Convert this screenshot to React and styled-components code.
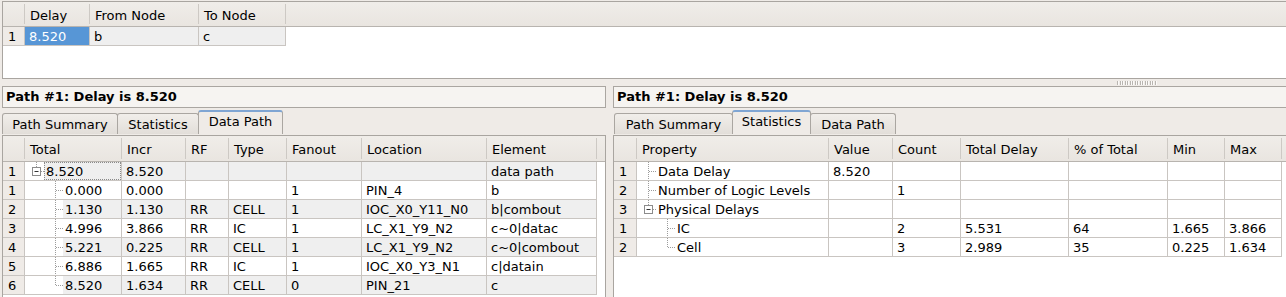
import React from "react";
import styled, { createGlobalStyle } from "styled-components";

const GlobalStyle = createGlobalStyle`
  html, body {
    margin: 0;
    padding: 0;
    background: #efebe7;
    overflow: hidden;
  }
  body {
    font-family: "DejaVu Sans", "Liberation Sans", sans-serif;
    font-size: 13px;
    color: #000;
  }
`;

const GRID = "#c9c5c1";

const Window = styled.div`
  width: 1286px;
  height: 297px;
  overflow: hidden;
  padding-top: 1px;
  box-sizing: border-box;
  display: flex;
  flex-direction: column;
`;

const TopPane = styled.div`
  flex: none;
  height: 78px;
  margin-left: 2px;
  box-sizing: border-box;
  border: 1px solid #a9a5a0;
  border-right: none;
  background: #fff;
  overflow: hidden;
`;

const HSplitter = styled.div`
  flex: none;
  height: 7px;
  display: flex;
  align-items: center;
  justify-content: flex-end;
  padding-right: 129px;
`;

const Grip = styled.div`
  width: 40px;
  height: 4px;
  background: repeating-linear-gradient(
    90deg,
    #b9b5b0 0 1px,
    #fbfaf9 1px 2px,
    #efebe7 2px 2.5px
  );
`;

const BottomPane = styled.div`
  flex: 1;
  display: flex;
  gap: 7px;
  min-height: 0;
`;

const Panel = styled.div`
  flex: none;
  width: ${(p) => p.$w}px;
  margin-left: ${(p) => p.$ml || 0}px;
  display: flex;
  flex-direction: column;
`;

const TitleBox = styled.div`
  flex: none;
  height: 22px;
  box-sizing: border-box;
  border: 1px solid #aaa6a1;
  background: #f6f4f1;
  font-weight: bold;
  line-height: 20px;
  padding-left: 3px;
  white-space: nowrap;
`;

const TabBar = styled.div`
  flex: none;
  display: flex;
  align-items: flex-end;
  height: 24px;
  margin-top: 2px;
  padding-left: ${(p) => p.$pl || 0}px;
`;

const Tab = styled.div`
  box-sizing: border-box;
  width: ${(p) => p.$w}px;
  height: ${(p) => (p.$active ? 24 : 21)}px;
  border: 1px solid #aaa6a1;
  border-bottom: none;
  border-top: ${(p) => (p.$active ? "2px solid #7fa5d3" : "1px solid #aaa6a1")};
  border-radius: 3px 3px 0 0;
  background: ${(p) =>
    p.$active ? "#efebe7" : "linear-gradient(#f1eeea, #e2ded9)"};
  display: flex;
  align-items: center;
  justify-content: center;
  padding-bottom: ${(p) => (p.$active ? 3 : 0)}px;
  white-space: nowrap;
  & + & {
    margin-left: -1px;
  }
`;

const Frame = styled.div`
  flex: 1;
  margin-top: 1px;
  box-sizing: border-box;
  border: 1px solid #a9a5a0;
  border-bottom: none;
  background: #fff;
  overflow: hidden;
`;

const HeaderRow = styled.div`
  display: grid;
  grid-template-columns: ${(p) => p.$cols};
  height: ${(p) => p.$h}px;
  box-sizing: border-box;
  background: linear-gradient(#f0ede9, #e9e5e0);
  border-bottom: 1px solid #b8b4af;
`;

const HeadCell = styled.div`
  box-sizing: border-box;
  border-right: 1px solid #cdc9c4;
  padding: 2px 0 0 5px;
  display: flex;
  align-items: center;
  white-space: nowrap;
  overflow: hidden;
  margin: 2px 0;
`;

const BodyRow = styled.div`
  display: grid;
  grid-template-columns: ${(p) => p.$cols};
  height: 19px;
`;

const Cell = styled.div`
  box-sizing: border-box;
  height: 19px;
  line-height: 20px;
  padding-left: 4px;
  border-right: 1px solid ${GRID};
  border-bottom: 1px solid ${GRID};
  background: ${(p) => (p.$sel ? "#5796d6" : p.$alt ? "#efefef" : "#fff")};
  color: ${(p) => (p.$sel ? "#fff" : "#000")};
  white-space: nowrap;
  overflow: hidden;
`;

const RowHead = styled(Cell)`
  background: #efebe7;
  padding-left: 5px;
`;

const TreeCell = styled.div`
  box-sizing: border-box;
  height: 19px;
  display: flex;
  border-right: 1px solid ${GRID};
  border-bottom: 1px solid ${GRID};
  background: #fff;
  overflow: hidden;
`;

const TreeLabel = styled.div`
  flex: 1;
  box-sizing: border-box;
  line-height: 20px;
  padding-left: 2px;
  white-space: nowrap;
  background: ${(p) => (p.$alt ? "#efefef" : "#fff")};
  outline: ${(p) => (p.$focus ? "1px dotted #8a8a8a" : "none")};
  outline-offset: -1px;
`;

const BranchSvg = styled.svg`
  flex: none;
  display: block;
`;

const DOT = { stroke: "#9c9c9c", strokeWidth: 1, strokeDasharray: "1 1" };

const Branch = ({ kind }) => (
  <BranchSvg width="19" height="18" viewBox="0 0 19 18">
    {kind === "mid" && (
      <>
        <line x1="11.5" y1="0" x2="11.5" y2="18" {...DOT} />
        <line x1="12" y1="9.5" x2="19" y2="9.5" {...DOT} />
      </>
    )}
    {kind === "last" && (
      <>
        <line x1="11.5" y1="0" x2="11.5" y2="10" {...DOT} />
        <line x1="12" y1="9.5" x2="19" y2="9.5" {...DOT} />
      </>
    )}
    {kind === "box" && (
      <>
        <line x1="11.5" y1="0" x2="11.5" y2="5" {...DOT} />
        <rect x="7.5" y="5.5" width="8" height="8" fill="#fff" stroke="#8c8c8c" />
        <line x1="9.5" y1="9.5" x2="13.5" y2="9.5" stroke="#333" />
        <line x1="16" y1="9.5" x2="19" y2="9.5" {...DOT} />
      </>
    )}
  </BranchSvg>
);

const Tree = ({ branches, alt, focus, children }) => (
  <TreeCell>
    {branches.map((b, i) => (
      <Branch key={i} kind={b} />
    ))}
    <TreeLabel $alt={alt} $focus={focus}>
      {children}
    </TreeLabel>
  </TreeCell>
);

const topCols = "22px 65px 109px 87px";
const leftCols = "22px 97px 64px 43px 58px 75px 125px 110px";
const rightCols = "23px 192px 64px 68px 108px 99px 57px 57px";

const leftRows = [
  { n: "1", br: ["box"], c: ["8.520", "8.520", "", "", "", "", "data path"], focus: true },
  { n: "1", br: ["none", "mid"], c: ["0.000", "0.000", "", "", "1", "PIN_4", "b"] },
  { n: "2", br: ["none", "mid"], c: ["1.130", "1.130", "RR", "CELL", "1", "IOC_X0_Y11_N0", "b|combout"] },
  { n: "3", br: ["none", "mid"], c: ["4.996", "3.866", "RR", "IC", "1", "LC_X1_Y9_N2", "c~0|datac"] },
  { n: "4", br: ["none", "mid"], c: ["5.221", "0.225", "RR", "CELL", "1", "LC_X1_Y9_N2", "c~0|combout"] },
  { n: "5", br: ["none", "mid"], c: ["6.886", "1.665", "RR", "IC", "1", "IOC_X0_Y3_N1", "c|datain"] },
  { n: "6", br: ["none", "last"], c: ["8.520", "1.634", "RR", "CELL", "0", "PIN_21", "c"] },
];

const rightRows = [
  { n: "1", br: ["mid"], c: ["Data Delay", "8.520", "", "", "", "", ""] },
  { n: "2", br: ["mid"], c: ["Number of Logic Levels", "", "1", "", "", "", ""] },
  { n: "3", br: ["box"], c: ["Physical Delays", "", "", "", "", "", ""] },
  { n: "1", br: ["none", "mid"], c: ["IC", "", "2", "5.531", "64", "1.665", "3.866"] },
  { n: "2", br: ["none", "last"], c: ["Cell", "", "3", "2.989", "35", "0.225", "1.634"] },
];

const Header = ({ cols, h, labels }) => (
  <HeaderRow $cols={cols} $h={h}>
    <HeadCell />
    {labels.map((l) => (
      <HeadCell key={l}>{l}</HeadCell>
    ))}
  </HeaderRow>
);

const PathPanel = ({ width, ml, tabs, active, tabPad, cols, labels, rows, striped }) => (
  <Panel $w={width} $ml={ml}>
    <TitleBox>Path #1: Delay is 8.520</TitleBox>
    <TabBar $pl={tabPad}>
      {tabs.map(([name, w]) => (
        <Tab key={name} $w={w} $active={name === active}>
          {name}
        </Tab>
      ))}
    </TabBar>
    <Frame>
      <Header cols={cols} h={26} labels={labels} />
      {rows.map((r, i) => {
        const alt = striped && i % 2 === 0;
        const [first, ...rest] = r.c;
        return (
          <BodyRow key={i} $cols={cols}>
            <RowHead>{r.n}</RowHead>
            <Tree branches={r.br} alt={alt} focus={r.focus}>
              {first}
            </Tree>
            {rest.map((v, j) => (
              <Cell key={j} $alt={alt}>
                {v}
              </Cell>
            ))}
          </BodyRow>
        );
      })}
    </Frame>
  </Panel>
);

export default function App() {
  return (
    <>
      <GlobalStyle />
      <Window>
        <TopPane>
          <Header cols={topCols} h={25} labels={["Delay", "From Node", "To Node"]} />
          <BodyRow $cols={topCols}>
            <RowHead>1</RowHead>
            <Cell $sel>8.520</Cell>
            <Cell $alt>b</Cell>
            <Cell $alt>c</Cell>
          </BodyRow>
        </TopPane>
        <HSplitter>
          <Grip />
        </HSplitter>
        <BottomPane>
          <PathPanel
            width={604}
            ml={2}
            tabs={[
              ["Path Summary", 116],
              ["Statistics", 82],
              ["Data Path", 85],
            ]}
            active="Data Path"
            cols={leftCols}
            labels={["Total", "Incr", "RF", "Type", "Fanout", "Location", "Element"]}
            rows={leftRows}
            striped
          />
          <PathPanel
            width={690}
            tabs={[
              ["Path Summary", 119],
              ["Statistics", 79],
              ["Data Path", 86],
            ]}
            tabPad={1}
            active="Statistics"
            cols={rightCols}
            labels={["Property", "Value", "Count", "Total Delay", "% of Total", "Min", "Max"]}
            rows={rightRows}
          />
        </BottomPane>
      </Window>
    </>
  );
}
